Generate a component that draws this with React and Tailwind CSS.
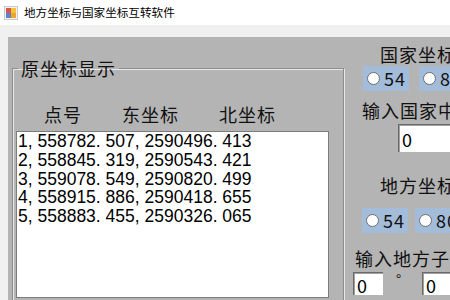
import React from "react";

const points = [
  "1, 558782. 507, 2590496. 413",
  "2, 558845. 319, 2590543. 421",
  "3, 559078. 549, 2590820. 499",
  "4, 558915. 886, 2590418. 655",
  "5, 558883. 455, 2590326. 065",
];

const AppIcon = () => (
  <svg width="14" height="14" viewBox="0 0 14 14">
    <rect x="0.5" y="0.5" width="13" height="13" fill="#f4f4f4" stroke="#c9c9c9" />
    <rect x="2" y="2" width="5" height="5" fill="#d9534f" />
    <rect x="7" y="2" width="5" height="5" fill="#f2c534" />
    <rect x="2" y="7" width="5" height="5" fill="#5a86c8" />
    <rect x="7" y="7" width="5" height="5" fill="#f0a332" />
  </svg>
);

// little winforms radio, unchecked
const Radio = ({ label, className = "" }) => (
  <div className={`flex items-center h-[25px] bg-[#a3bcd9] pl-[4px] pr-[3px] gap-[4px] ${className}`}>
    <span className="w-[13px] h-[13px] rounded-full bg-white border border-[#6f6f6f] shrink-0" />
    <span className="text-[18px] leading-[25px] text-[#111]">{label}</span>
  </div>
);

const Field = ({ value, className = "" }) => (
  <div
    className={`bg-white border-t border-l border-[#6a6a6a] shadow-[inset_1px_1px_0_#a0a0a0] text-[18px] leading-[24px] pl-[3px] text-black ${className}`}
  >
    {value}
  </div>
);

export default function App() {
  return (
    <div
      className="w-[450px] h-[300px] overflow-hidden flex flex-col bg-white text-[#111]"
      style={{ fontFamily: '"Noto Sans CJK SC", "Noto Sans", sans-serif' }}
    >
      {/* title bar */}
      <div className="h-[25px] shrink-0 flex items-center pl-[4px] gap-[6px]">
        <AppIcon />
        <span className="text-[11.6px] leading-none text-black">地方坐标与国家坐标互转软件</span>
      </div>

      <div className="flex-1 bg-[#f0f0f0] pt-[12px] pl-[8px] flex min-h-0">
        <div className="flex-1 bg-[#b4b4b4] flex pl-[4px] min-h-0 whitespace-nowrap">
          {/* left group box */}
          <fieldset className="w-[332px] shrink-0 mt-[19px] border border-[#8d8d8d] shadow-[inset_1px_1px_0_#e8e8e8,1px_1px_0_#e8e8e8] h-[260px]">
            <legend className="ml-[5px] px-[3px] text-[18px] leading-[24px] tracking-[1px]">原坐标显示</legend>
            <div className="flex mt-[22px] text-[18px] leading-[24px] tracking-[1px]">
              <span className="w-[78px] ml-[31px]">点号</span>
              <span className="w-[97px]">东坐标</span>
              <span>北坐标</span>
            </div>
            <div className="ml-[3px] mt-[5px] w-[313px] h-[167px] bg-white border border-[#7c7c7c] pl-[1px] text-[17.5px] leading-[18.75px] text-black font-['Liberation_Sans',Arial,sans-serif]">
              {points.map((p) => (
                <div key={p}>{p}</div>
              ))}
            </div>
          </fieldset>

          {/* right column */}
          <div className="flex flex-col pt-[5px] text-[18px] leading-[24px] tracking-[1px]">
            <div className="ml-[36px]">国家坐标系</div>
            <div className="flex ml-[19px] gap-[10px]">
              <Radio label="54" />
              <Radio label="80" />
            </div>
            <div className="ml-[18px] mt-[7px]">输入国家中央子午线</div>
            <Field value="0" className="ml-[54px] mt-[2px] w-[60px] h-[28px] leading-[28px]" />
            <div className="ml-[36px] mt-[21px]">地方坐标系</div>
            <div className="flex ml-[18px] mt-[11px] gap-[7px]">
              <Radio label="54" />
              <Radio label="80" />
            </div>
            <div className="ml-[11px] mt-[13px]">输入地方子午线</div>
            <div className="flex items-start ml-[9px] mt-[2px]">
              <Field value="0" className="w-[30px] h-[23px] leading-[23px]" />
              <span className="ml-[13px] w-[26px] text-[14px] leading-[14px]">°</span>
              <Field value="0" className="w-[30px] h-[23px] leading-[23px]" />
            </div>
          </div>
        </div>
      </div>
    </div>
  );
}
